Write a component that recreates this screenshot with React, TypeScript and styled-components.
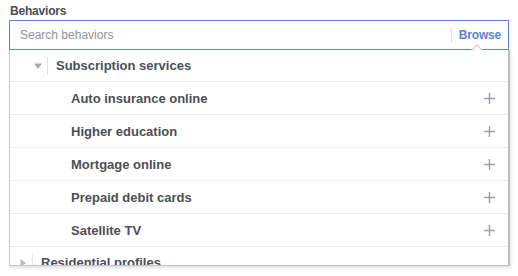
import React from 'react';
import styled, { createGlobalStyle } from 'styled-components';

const GlobalStyle = createGlobalStyle`
  html, body {
    margin: 0;
    background: #fff;
  }
  body {
    font-family: "Liberation Sans", Arial, sans-serif;
    color: #4b4f56;
    -webkit-font-smoothing: antialiased;
  }
`;

const children = [
  'Auto insurance online',
  'Higher education',
  'Mortgage online',
  'Prepaid debit cards',
  'Satellite TV',
];

const Triangle: React.FC<{ open?: boolean }> = ({ open }) => (
  <svg width="8" height="8" viewBox="0 0 8 8">
    {open ? (
      <polygon points="0,1.5 8,1.5 4,7" fill="#a5a9b0" />
    ) : (
      <polygon points="1.5,0 7,4 1.5,8" fill="#b8bcc2" />
    )}
  </svg>
);

const Plus = () => (
  <svg width="11" height="11" viewBox="0 0 11 11">
    <path d="M5.5 0v11M0 5.5h11" stroke="#9a9ea6" strokeWidth="1.4" />
  </svg>
);

export default function App() {
  return (
    <>
      <GlobalStyle />
      <Page>
        <Label>Behaviors</Label>
        <SearchBox>
          <Placeholder>Search behaviors</Placeholder>
          <Divider />
          <BrowseLink>Browse</BrowseLink>
          <Notch />
        </SearchBox>
        <Menu>
          <GroupRow>
            <Toggle $indent={24}>
              <Triangle open />
            </Toggle>
            <GroupName>Subscription services</GroupName>
          </GroupRow>
          {children.map((name) => (
            <ItemRow key={name}>
              <ItemName>{name}</ItemName>
              <Plus />
            </ItemRow>
          ))}
          <GroupRow $cut>
            <Toggle $indent={9} $plain>
              <Triangle />
            </Toggle>
            <GroupName>Residential profiles</GroupName>
          </GroupRow>
        </Menu>
      </Page>
    </>
  );
}

const Page = styled.div`
  width: 518px;
  height: 276px;
  padding: 0 9px;
  box-sizing: border-box;
  overflow: hidden;
`;

const Label = styled.div`
  height: 20px;
  padding-top: 4px;
  padding-left: 1px;
  box-sizing: border-box;
  font-size: 12px;
  font-weight: bold;
  line-height: 14px;
  letter-spacing: -0.2px;
  color: #4b4f56;
`;

const SearchBox = styled.div`
  position: relative;
  display: flex;
  align-items: center;
  width: 500px;
  height: 30px;
  box-sizing: border-box;
  border: 1px solid #5d81d8;
  padding: 0 7px 0 10px;
`;

const Placeholder = styled.span`
  flex: 1;
  font-size: 12px;
  color: #90949c;
`;

const Divider = styled.span`
  width: 1px;
  height: 15px;
  background: #dddfe2;
  margin-right: 7px;
`;

const BrowseLink = styled.span`
  font-size: 12px;
  font-weight: bold;
  color: #5d7fd6;
  letter-spacing: -0.2px;
`;

const Notch = styled.span`
  position: absolute;
  right: 27px;
  bottom: -1px;
  width: 7px;
  height: 7px;
  background: #fff;
  border-left: 1px solid #c5c9d0;
  border-top: 1px solid #c5c9d0;
  transform: translateY(50%) rotate(45deg);
`;

const Menu = styled.div`
  width: 501px;
  height: 216px;
  box-sizing: border-box;
  border-left: 1px solid #c9ccd1;
  border-right: 2px solid #babec4;
  border-bottom: 1px solid #c0c4ca;
  box-shadow: 1px 2px 3px rgba(0, 0, 0, 0.12);
  overflow: hidden;
  background: #fff;
`;

const GroupRow = styled.div<{ $cut?: boolean }>`
  display: flex;
  align-items: center;
  height: ${({ $cut }) => ($cut ? '31px' : '32px')};
  box-sizing: border-box;
  border-bottom: ${({ $cut }) => ($cut ? 'none' : '1px solid #e9ebee')};
`;

const Toggle = styled.span<{ $indent: number; $plain?: boolean }>`
  display: flex;
  align-items: center;
  height: 18px;
  margin-left: ${({ $indent }) => $indent}px;
  padding-right: 5px;
  margin-right: 8px;
  border-right: 1px solid ${({ $plain }) => ($plain ? '#e6e8eb' : '#dddfe2')};
`;

const GroupName = styled.span`
  font-size: 13px;
  font-weight: bold;
  color: #4b4f56;
`;

const ItemRow = styled.div`
  display: flex;
  align-items: center;
  justify-content: space-between;
  height: 33px;
  box-sizing: border-box;
  padding: 0 13px 0 61px;
  border-bottom: 1px solid #e9ebee;
`;

const ItemName = styled.span`
  font-size: 13px;
  font-weight: bold;
  color: #4b4f56;
`;
